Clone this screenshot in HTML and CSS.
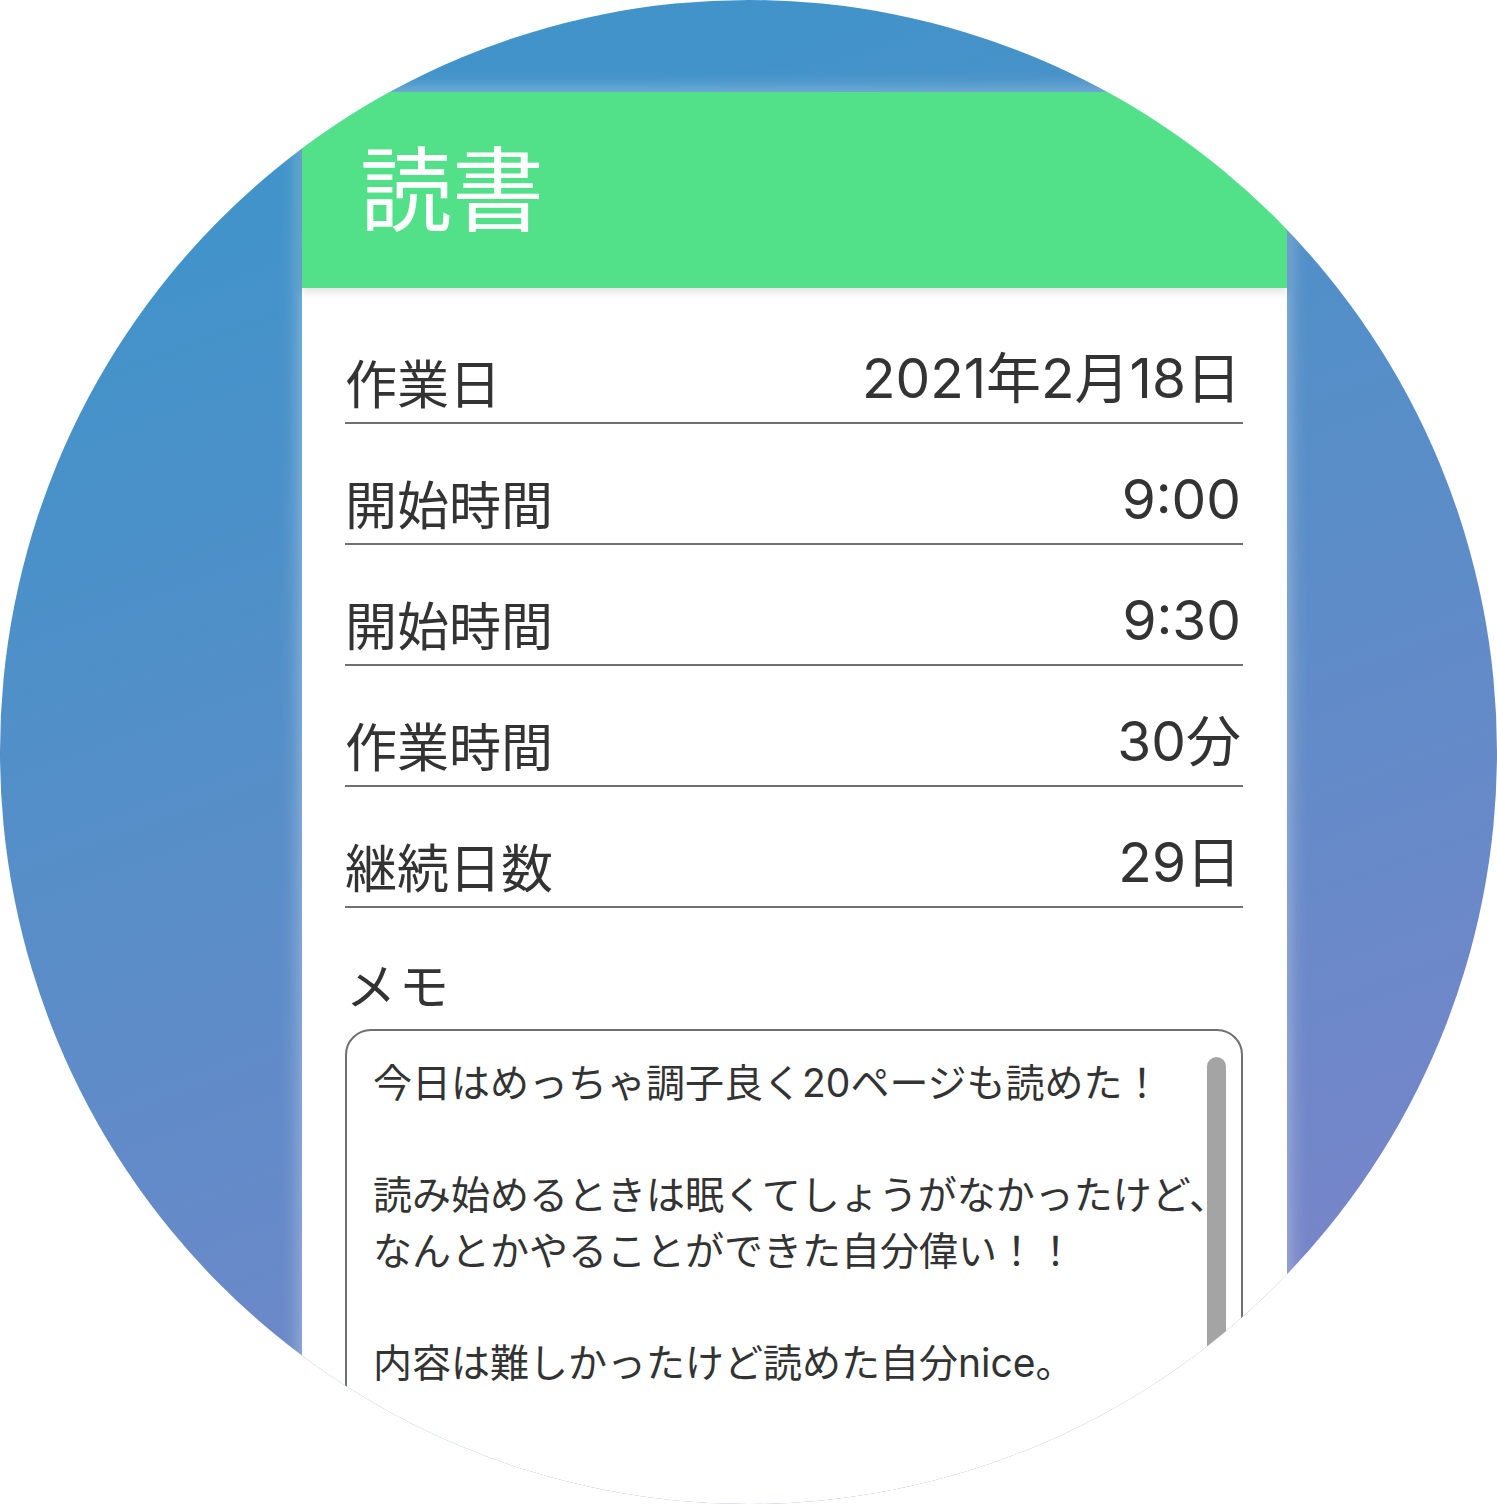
FILE: index.html
```html
<!DOCTYPE html>
<html lang="ja">
<head>
<meta charset="utf-8">
<title>読書</title>
<link rel="stylesheet" href="styles.css">
</head>
<body>
<div class="circle">
  <div class="card">
    <div class="card-header"><h1 class="title">読書</h1></div>
    <div class="card-body">
      <div class="row"><span class="label">作業日</span><span class="value">2021年2月18日</span></div>
      <div class="row"><span class="label">開始時間</span><span class="value">9:00</span></div>
      <div class="row"><span class="label">開始時間</span><span class="value">9:30</span></div>
      <div class="row"><span class="label">作業時間</span><span class="value">30分</span></div>
      <div class="row"><span class="label">継続日数</span><span class="value">29日</span></div>
      <div class="memo-label">メモ</div>
      <div class="memo-box">
        <div class="memo-text">今日はめっちゃ調子良く20ページも読めた！<br><br>読み始めるときは眠くてしょうがなかったけど、<br>なんとかやることができた自分偉い！！<br><br>内容は難しかったけど読めた自分nice。</div>
        <div class="scroll-thumb"></div>
      </div>
    </div>
  </div>
</div>
</body>
</html>
```

FILE: styles.css
```css
html, body {
  margin: 0;
  padding: 0;
  background: #ffffff;
}
body {
  font-family: "Noto Sans CJK JP", "Noto Sans", sans-serif;
  color: #333333;
}
.circle {
  width: 1497px;
  height: 1504px;
  border-radius: 50%;
  overflow: hidden;
  background: linear-gradient(160deg, #4193c9 15%, #5f8cc8 55%, #7e83c9 95%);
  padding: 92px 0 0 302px;
  box-sizing: border-box;
}
.card {
  width: 985px;
  height: 1600px;
  background: #ffffff;
  box-shadow: 0 0 20px rgba(255, 255, 255, 0.45);
}
.card-header {
  position: relative;
  z-index: 1;
  height: 196px;
  box-sizing: border-box;
  background: #52e088;
  display: flex;
  align-items: center;
  padding: 0 0 12px 58px;
  box-shadow: 0 4px 8px rgba(0, 0, 0, 0.12);
}
.title {
  margin: 0;
  font-size: 92px;
  font-weight: 400;
  line-height: 1;
  color: #ffffff;
}
.card-body {
  padding: 15px 44px 0 43px;
}
.row {
  height: 121px;
  box-sizing: border-box;
  border-bottom: 2px solid #707070;
  display: flex;
  justify-content: space-between;
  align-items: flex-end;
  padding-bottom: 12px;
}
.label {
  font-size: 52px;
  line-height: 1;
  padding-bottom: 2px;
}
.value {
  font-family: "Inter", "Noto Sans CJK JP", sans-serif;
  font-size: 55px;
  line-height: 1;
  padding-bottom: 4px;
  padding-right: 2px;
}
.memo-label {
  font-size: 50px;
  line-height: 1;
  margin-top: 50px;
  padding-left: 1px;
  letter-spacing: 3px;
}
.memo-box {
  position: relative;
  margin-top: 21px;
  height: 560px;
  border: 2px solid #707070;
  border-radius: 26px;
  padding: 24px 0 0 26px;
}
.memo-text {
  font-family: "Inter", "Noto Sans CJK JP", sans-serif;
  font-size: 39px;
  line-height: 56px;
}
.scroll-thumb {
  position: absolute;
  top: 26px;
  right: 15px;
  width: 19px;
  height: 500px;
  background: #a4a4a4;
  border-radius: 10px;
}
```
